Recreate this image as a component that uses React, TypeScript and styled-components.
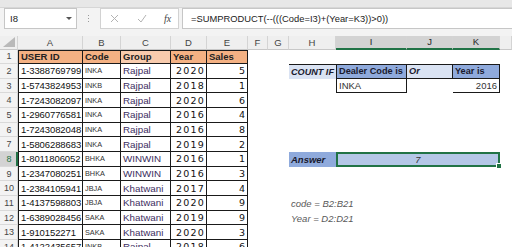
import React from "react";
import styled, { createGlobalStyle, css } from "styled-components";

const GlobalStyle = createGlobalStyle`
  html, body { margin: 0; padding: 0; background: #ffffff; }
  body { font-family: "Liberation Sans", Arial, sans-serif; }
  * { box-sizing: border-box; }
`;

const Window = styled.div`
  width: 512px;
  height: 247px;
  overflow: hidden;
  background: #ffffff;
  display: flex;
  flex-direction: column;
`;

const TopBand = styled.div`
  flex: none;
  height: 8px;
  background: #e7e7e7;
  border-bottom: 1px solid #d6d6d6;
`;

const FormulaBar = styled.div`
  flex: none;
  height: 28px;
  background: #f3f3f3;
  display: flex;
  align-items: flex-start;
  padding: 0 0 0 4px;
`;

const NameBox = styled.div`
  width: 73px;
  height: 21px;
  background: #ffffff;
  border: 1px solid #c6c6c6;
  display: flex;
  align-items: center;
  justify-content: space-between;
  padding: 0 4px 0 5px;
  font-size: 9.5px;
  color: #222;
`;

const DropArrow = styled.span`
  width: 0;
  height: 0;
  border-left: 3px solid transparent;
  border-right: 3px solid transparent;
  border-top: 3px solid #555;
`;

const Grip = styled.div`
  width: 23px;
  height: 21px;
  display: flex;
  flex-direction: column;
  align-items: center;
  justify-content: center;
  gap: 2px;
`;

const GripDot = styled.span`
  width: 1px;
  height: 1px;
  background: #9a9a9a;
`;

const ButtonBox = styled.div`
  width: 79px;
  height: 21px;
  background: #ffffff;
  border: 1px solid #d2d2d2;
  display: grid;
  grid-template-columns: 27px 27px 25px;
  align-items: center;
  justify-items: center;
`;

const FxLabel = styled.span`
  font-family: "Liberation Serif", serif;
  font-style: italic;
  font-size: 10px;
  color: #444;
`;

const FormulaInput = styled.div`
  flex: 1;
  height: 21px;
  margin-left: 3px;
  background: #ffffff;
  border: 1px solid #c6c6c6;
  border-right: none;
  display: flex;
  align-items: center;
  padding-left: 8px;
  font-size: 9.35px;
  color: #222;
  white-space: nowrap;
`;

const Sheet = styled.div`
  flex: none;
  display: grid;
  grid-template-columns: 18px 65px 38px 50px 36px 41px 20px 21px 47px 71px 46px 47px 12px;
  grid-template-rows: 13.5px repeat(14, 14.67px);
`;

const Corner = styled.div`
  background: #efefef;
  border-right: 1px solid #d4d4d4;
  border-bottom: 1px solid #c8c8c8;
  display: flex;
  align-items: flex-end;
  justify-content: flex-end;
  padding: 0 2px 2px 0;
`;

const ColHead = styled.div<{ $sel?: boolean }>`
  background: ${(p) => (p.$sel ? "#d3d3d3" : "#efefef")};
  border-right: 1px solid #d4d4d4;
  border-bottom: ${(p) => (p.$sel ? "2px solid #217346" : "1px solid #c8c8c8")};
  display: flex;
  align-items: center;
  justify-content: center;
  font-size: 9.5px;
  color: ${(p) => (p.$sel ? "#262626" : "#444")};
`;

const RowHead = styled.div<{ $sel?: boolean }>`
  background: ${(p) => (p.$sel ? "#d3d3d3" : "#f3f3f3")};
  border-bottom: 1px solid #d9d9d9;
  ${(p) =>
    p.$sel
      ? css`
          box-shadow: inset -2px 0 0 #217346;
        `
      : css`
          box-shadow: inset -1px 0 0 #d4d4d4;
        `}
  display: flex;
  align-items: center;
  justify-content: center;
  font-size: 9px;
  color: ${(p) => (p.$sel ? "#217346" : "#444")};
`;

type CellProps = {
  $bg?: string;
  $align?: "left" | "right" | "center";
  $bold?: boolean;
  $italic?: boolean;
  $color?: string;
  $size?: number;
  $b?: string;
  $span?: number;
  $track?: number;
  $pad?: string;
  $wide?: boolean;
};

const Cell = styled.div<CellProps>`
  position: relative;
  min-width: 0;
  background: ${(p) => p.$bg || "transparent"};
  display: flex;
  align-items: center;
  justify-content: ${(p) =>
    p.$align === "right" ? "flex-end" : p.$align === "center" ? "center" : "flex-start"};
  padding: ${(p) => p.$pad || "0 2px"};
  white-space: nowrap;
  overflow: visible;
  font-family: ${(p) => (p.$wide ? '"DejaVu Sans", Verdana, sans-serif' : "inherit")};
  font-size: ${(p) => p.$size || 9.5}px;
  font-weight: ${(p) => (p.$bold ? 700 : 400)};
  font-style: ${(p) => (p.$italic ? "italic" : "normal")};
  color: ${(p) => p.$color || "#111"};
  letter-spacing: ${(p) => (p.$track !== undefined ? p.$track : 0)}px;
  grid-column: ${(p) => (p.$span ? `span ${p.$span}` : "auto")};
  border-top: ${(p) => (p.$b?.includes("t") ? "1px solid #1a1a1a" : "none")};
  border-right: ${(p) => (p.$b?.includes("r") ? "1px solid #1a1a1a" : "none")};
  border-bottom: ${(p) => (p.$b?.includes("b") ? "1px solid #1a1a1a" : "none")};
  border-left: ${(p) => (p.$b?.includes("l") ? "1px solid #1a1a1a" : "none")};
`;

const SelectedCell = styled(Cell)`
  border: 2px solid #217346;
  z-index: 2;
`;

const FillHandle = styled.span`
  position: absolute;
  right: -4px;
  bottom: -4px;
  width: 6px;
  height: 6px;
  background: #217346;
  border: 1px solid #ffffff;
`;

const cols = ["A", "B", "C", "D", "E", "F", "G", "H", "I", "J", "K", ""];
const selCols = ["I", "J", "K"];

const data: [string, string, string, string, string][] = [
  ["1-3388769799", "INKA", "Rajpal", "2020", "5"],
  ["1-5743824953", "INKB", "Rajpal", "2018", "1"],
  ["1-7243082097", "INKA", "Rajpal", "2020", "6"],
  ["1-2960776581", "INKA", "Rajpal", "2016", "4"],
  ["1-7243082048", "INKA", "Rajpal", "2016", "8"],
  ["1-5806288683", "INKA", "Rajpal", "2019", "2"],
  ["1-8011806052", "BHKA", "WINWIN", "2016", "1"],
  ["1-2347080251", "BHKA", "WINWIN", "2016", "3"],
  ["1-2384105941", "JBJA", "Khatwani", "2017", "4"],
  ["1-4137598803", "JBJA", "Khatwani", "2020", "9"],
  ["1-6389028456", "SAKA", "Khatwani", "2019", "9"],
  ["1-910152271", "SAKA", "Khatwani", "2020", "3"],
  ["1-4122435657", "INKB", "Rajpal", "2018", "6"],
];

const ORANGE = "#f4b183";
const PEACH = "#f8cbad";
const LIGHT_BLUE = "#dae3f3";
const MID_BLUE = "#8faadc";
const SEL_BLUE = "#b4c7e7";
const PURPLE = "#3b2d5e";

function rightSide(row: number): React.ReactNode[] {
  const k = (c: string) => `r${row}-${c}`;
  if (row === 2) {
    return [
      <Cell key={k("F")} />,
      <Cell key={k("G")} />,
      <Cell key={k("H")} $bg={LIGHT_BLUE} $bold $italic $b="t" $size={9.1} $pad="0 0 0 2px" $color="#1a1a2e">
        COUNT IF
      </Cell>,
      <Cell key={k("I")} $bg={MID_BLUE} $bold $b="trbl" $size={9.2} $color="#1a1a2e">
        Dealer Code is
      </Cell>,
      <Cell key={k("J")} $bg={LIGHT_BLUE} $bold $italic $b="trb" $size={9.2} $color="#1a1a2e">
        Or
      </Cell>,
      <Cell key={k("K")} $bg={MID_BLUE} $bold $b="trb" $size={9.2} $color="#1a1a2e">
        Year is
      </Cell>,
      <Cell key={k("L")} />,
    ];
  }
  if (row === 3) {
    return [
      <Cell key={k("F")} />,
      <Cell key={k("G")} />,
      <Cell key={k("H")} />,
      <Cell key={k("I")} $b="lrb" $color="#333">
        INKA
      </Cell>,
      <Cell key={k("J")} />,
      <Cell key={k("K")} $b="rb" $align="right" $color="#333">
        2016
      </Cell>,
      <Cell key={k("L")} />,
    ];
  }
  if (row === 8) {
    return [
      <Cell key={k("F")} />,
      <Cell key={k("G")} />,
      <Cell key={k("H")} $bg={MID_BLUE} $bold $italic $color="#1a1a2e">
        Answer
      </Cell>,
      <SelectedCell key={k("IK")} $span={3} $bg={SEL_BLUE} $italic $align="center" $color="#333">
        7
        <FillHandle />
      </SelectedCell>,
      <Cell key={k("L")} />,
    ];
  }
  if (row === 11 || row === 12) {
    return [
      <Cell key={k("F")} />,
      <Cell key={k("G")} />,
      <Cell key={k("H")} $italic $color="#595959">
        {row === 11 ? "code = B2:B21" : "Year = D2:D21"}
      </Cell>,
      <Cell key={k("I")} />,
      <Cell key={k("J")} />,
      <Cell key={k("K")} />,
      <Cell key={k("L")} />,
    ];
  }
  return ["F", "G", "H", "I", "J", "K", "L"].map((c) => <Cell key={k(c)} />);
}

export default function App() {
  return (
    <>
      <GlobalStyle />
      <Window>
        <TopBand />
        <FormulaBar>
          <NameBox>
            <span>I8</span>
            <DropArrow />
          </NameBox>
          <Grip>
            <GripDot />
            <GripDot />
            <GripDot />
          </Grip>
          <ButtonBox>
            <svg width="9" height="9" viewBox="0 0 9 9">
              <path d="M1 1 L8 8 M8 1 L1 8" stroke="#b3b3b3" strokeWidth="1" fill="none" />
            </svg>
            <svg width="10" height="9" viewBox="0 0 10 9">
              <path d="M1 5 L4 8 L9 1" stroke="#b3b3b3" strokeWidth="1" fill="none" />
            </svg>
            <FxLabel>fx</FxLabel>
          </ButtonBox>
          <FormulaInput>=SUMPRODUCT(--(((Code=I3)+(Year=K3))&gt;0))</FormulaInput>
        </FormulaBar>
        <Sheet>
          <Corner>
            <svg width="12" height="10" viewBox="0 0 12 10">
              <polygon points="12,0 12,10 0,10" fill="#b9b9b9" />
            </svg>
          </Corner>
          {cols.map((c, i) => (
            <ColHead key={`h${i}`} $sel={selCols.includes(c)}>
              {c}
            </ColHead>
          ))}

          <RowHead>1</RowHead>
          <Cell $bg={ORANGE} $bold $b="tlrb" $color="#222">USER ID</Cell>
          <Cell $bg={ORANGE} $bold $b="trb" $color="#222">Code</Cell>
          <Cell $bg={PEACH} $bold $b="trb" $color="#222">Group</Cell>
          <Cell $bg={ORANGE} $bold $b="trb" $color="#222">Year</Cell>
          <Cell $bg={ORANGE} $bold $b="trb" $color="#222">Sales</Cell>
          {rightSide(1)}

          {data.map((r, i) => {
            const row = i + 2;
            return (
              <React.Fragment key={`row${row}`}>
                <RowHead $sel={row === 8}>{row}</RowHead>
                <Cell $b="lrb" $track={-0.1}>{r[0]}</Cell>
                <Cell $b="rb" $size={7.3} $color="#333">{r[1]}</Cell>
                <Cell $b="rb" $size={9.8} $color={PURPLE}>{r[2]}</Cell>
                <Cell $b="rb" $align="right" $wide $size={9.5} $track={1.2} $pad="0 1px 0 2px">{r[3]}</Cell>
                <Cell $b="rb" $align="right" $wide $size={9.5}>{r[4]}</Cell>
                {rightSide(row)}
              </React.Fragment>
            );
          })}
        </Sheet>
      </Window>
    </>
  );
}
